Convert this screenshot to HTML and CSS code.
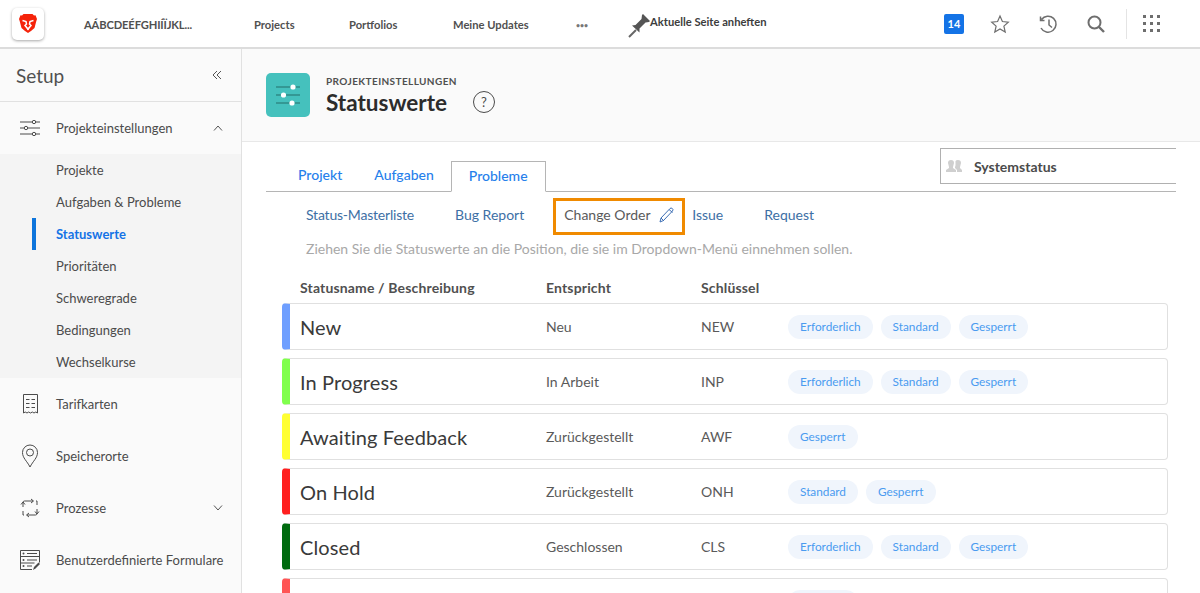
FILE: index.html
```html
<!DOCTYPE html>
<html>
  <head>
    <meta charset="UTF-8" />
    <title>Statuswerte</title>
    <link rel="stylesheet" href="styles.css">
  </head>
  <body>
    <header class="topbar">
      <div class="logo">
        <svg width="18" height="19" viewBox="0 0 18 19">
          <path d="M4.500 0h9L15 1.500l1.500-.2L18 5l-.8 2.500L15.500 14 12 17l-3 2-3-2-3.500-3L.8 7.500 0 5l1.500-3.700L3 1.500z" fill="#f5230a" />
          <path d="M3.500 6.500L7 7.500 7.500 10 6 11.500 9 15l3-3.500L10.500 10 11 7.500l3.500-1" fill="none" stroke="#fff" stroke-width="1.500" />
          <path d="M7.500 14.500h3L9 16.500z" fill="#fff" />
        </svg>
      </div>
      <nav class="topnav">
        <a class="nav-company">AÁBCDEÉFGHIÍÏJKL...</a>
        <a class="nav-projects">Projects</a>
        <a class="nav-portfolios">Portfolios</a>
        <a class="nav-updates">Meine Updates</a>
        <a class="nav-more">&#8226;&#8226;&#8226;</a>
      </nav>
      <div class="pin">
        <svg width="22" height="24" viewBox="0 0 22 24">
          <path d="M1 23l7-7" stroke="#666" stroke-width="2" />
          <path d="M4 11.500l3.500-.5 6-6L14 1l1-1 7 7-1 1-3.500.5-6 6 0 4z" fill="#555" />
        </svg>
        <span>Aktuelle Seite anheften</span>
      </div>
      <div class="top-icons">
        <span class="badge">14</span>
        <svg class="top-icon" width="20" height="20" viewBox="0 0 20 20">
          <path d="M10 2l2.400 5.500 5.900.6-4.400 4 1.300 5.900-5.200-3-5.200 3 1.300-5.900-4.400-4 5.900-.6z" fill="none" stroke="#6e6e6e" stroke-width="1.200" />
        </svg>
        <svg class="top-icon" width="20" height="20" viewBox="0 0 20 20">
          <path d="M3.500 5.500A8 8 0 1 1 3 14M2.500 2.500v4h4M11 5.500V11l3 2.500" fill="none" stroke="#6e6e6e" stroke-width="1.500" />
        </svg>
        <svg class="top-icon" width="20" height="20" viewBox="0 0 20 20">
          <circle cx="8.500" cy="8.500" r="6" fill="none" stroke="#6e6e6e" stroke-width="2" />
          <path d="M13 13l5 5" stroke="#6e6e6e" stroke-width="2.400" />
        </svg>
        <span class="divider"></span>
        <div class="grid-icon">
          <i></i><i></i><i></i><i></i><i></i><i></i><i></i><i></i><i></i>
        </div>
      </div>
    </header>

    <div class="layout">
      <aside class="sidebar">
        <div class="side-head">
          <h2>Setup</h2>
          <svg width="10" height="10" viewBox="0 0 10 10">
            <path d="M5 1L1 5l4 4M9 1L5 5l4 4" fill="none" stroke="#555" stroke-width="1" />
          </svg>
        </div>
        <div class="side-item side-open">
          <svg class="side-icon" width="20" height="16" viewBox="0 0 20 16">
            <path d="M0 2h12M16 2h4M0 8h4M8 8h12M0 14h12M16 14h4" stroke="#4b4b4b" stroke-width="1" />
            <circle cx="14" cy="2" r="1.700" fill="none" stroke="#4b4b4b" />
            <circle cx="6" cy="8" r="1.700" fill="none" stroke="#4b4b4b" />
            <circle cx="14" cy="14" r="1.700" fill="none" stroke="#4b4b4b" />
          </svg>
          <span>Projekteinstellungen</span>
          <svg class="chev" width="10" height="6" viewBox="0 0 10 6">
            <path d="M1 5.500L5 1l4 4.500" fill="none" stroke="#555" />
          </svg>
        </div>
        <ul class="sub-list">
          <li>Projekte</li>
          <li>Aufgaben &amp; Probleme</li>
          <li class="current">Statuswerte</li>
          <li>Prioritäten</li>
          <li>Schweregrade</li>
          <li>Bedingungen</li>
          <li>Wechselkurse</li>
        </ul>
        <div class="side-item">
          <svg class="side-icon" width="20" height="22" viewBox="0 0 20 22">
            <path d="M3.500 20V1.500h14V20l-1.700-1-1.800 1-1.700-1-1.800 1-1.800-1-1.700 1-1.800-1z" fill="none" stroke="#4b4b4b" />
            <path d="M6 6.500h3.500M11.500 6.500H15M6 10.500h3.500M11.500 10.500H15M6 14.500h3.500M11.500 14.500H15" stroke="#4b4b4b" />
          </svg>
          <span>Tarifkarten</span>
        </div>
        <div class="side-item">
          <svg class="side-icon" width="20" height="24" viewBox="0 0 20 24">
            <path d="M10 23C7 17 2.500 14 2.500 8.500a7.500 7.500 0 0 1 15 0C17.500 14 13 17 10 23z" fill="none" stroke="#4b4b4b" />
            <circle cx="10" cy="8.500" r="3.500" fill="none" stroke="#4b4b4b" />
          </svg>
          <span>Speicherorte</span>
        </div>
        <div class="side-item">
          <svg class="side-icon" width="20" height="20" viewBox="0 0 20 20">
            <path d="M3 9V4.500Q3 3 4.500 3H13M11 1l2.500 2L11 5M17 11v4.500Q17 17 15.500 17H7M9 15l-2.500 2L9 19M16 3h1v4M3 13v4h1M1 6.500L3 4l2 2.500M15 13.500l2 2.500 2-2.500" fill="none" stroke="#4b4b4b" />
          </svg>
          <span>Prozesse</span>
          <svg class="chev" width="10" height="6" viewBox="0 0 10 6">
            <path d="M1 .5L5 5l4-4.500" fill="none" stroke="#555" />
          </svg>
        </div>
        <div class="side-item">
          <svg class="side-icon" width="20" height="20" viewBox="0 0 20 20">
            <path d="M12 19.500H.5V.5h19v12" fill="none" stroke="#4b4b4b" />
            <path d="M.5 6.500h19M.5 13h14M7 3.500h10M7 10h10M7 16h5" stroke="#4b4b4b" />
            <circle cx="3.500" cy="3.500" r="1" fill="#4b4b4b" />
            <circle cx="3.500" cy="10" r="1" fill="#4b4b4b" />
            <circle cx="3.500" cy="16" r="1" fill="#4b4b4b" />
            <path d="M13 20l1-3 4.500-4.500L20 14l-4.500 4.500z" fill="#4b4b4b" />
          </svg>
          <span>Benutzerdefinierte Formulare</span>
        </div>
      </aside>

      <main class="main">
        <div class="page-head">
          <div class="page-icon">
            <svg width="24" height="24" viewBox="0 0 24 24">
              <path d="M0 4h24M0 12h24M0 20h24" stroke="#2f8a87" stroke-width="1.400" />
              <circle cx="17" cy="4" r="2.600" fill="#fff" />
              <circle cx="7.500" cy="12" r="2.600" fill="#fff" />
              <circle cx="16" cy="20" r="2.600" fill="#fff" />
            </svg>
          </div>
          <div class="page-title">
            <div class="eyebrow">PROJEKTEINSTELLUNGEN</div>
            <div class="title-line">
              <h1>Statuswerte</h1>
              <span class="help">?</span>
            </div>
          </div>
        </div>

        <div class="content">
          <div class="tabs-row">
            <div class="tabs">
              <a class="tab">Projekt</a>
              <a class="tab">Aufgaben</a>
              <a class="tab tab-active">Probleme</a>
            </div>
            <div class="group-box">
              <svg width="16" height="12" viewBox="0 0 16 12">
                <path d="M0 12V10l3-2V7L2 3q0-3 3-3t3 3L7 7v1l3 2v2zM11 12V10L9 8V7q.5-1 .5-2L9.500 1Q10 0 12 0q3 0 3 3l-1 4v1l2 2v2z" fill="#cfcfcf" />
              </svg>
              <span>Systemstatus</span>
            </div>
          </div>

          <div class="subtabs">
            <a class="subtab subtab-first">Status-Masterliste</a>
            <a class="subtab">Bug Report</a>
            <a class="subtab subtab-active">
              Change Order
              <svg width="16" height="16" viewBox="0 0 16 16">
                <path d="M1 15l1-4 9-9.500q1-1 2.300 0t.2 2.500L4.500 13.500zM2 11l3 3M10 2.500l3.500 3" fill="none" stroke="#3d6fb5" />
              </svg>
            </a>
            <a class="subtab subtab-issue">Issue</a>
            <a class="subtab">Request</a>
          </div>

          <p class="hint">Ziehen Sie die Statuswerte an die Position, die sie im Dropdown-Menü einnehmen sollen.</p>

          <div class="status-head">
            <span>Statusname / Beschreibung</span>
            <span>Entspricht</span>
            <span>Schlüssel</span>
          </div>

          <div class="status-row c-blue">
            <span class="status-name">New</span>
            <span class="status-cell">Neu</span>
            <span class="status-cell">NEW</span>
            <div class="pills"><span>Erforderlich</span><span>Standard</span><span>Gesperrt</span></div>
          </div>
          <div class="status-row c-lime">
            <span class="status-name">In Progress</span>
            <span class="status-cell">In Arbeit</span>
            <span class="status-cell">INP</span>
            <div class="pills"><span>Erforderlich</span><span>Standard</span><span>Gesperrt</span></div>
          </div>
          <div class="status-row c-yellow">
            <span class="status-name">Awaiting Feedback</span>
            <span class="status-cell">Zurückgestellt</span>
            <span class="status-cell">AWF</span>
            <div class="pills"><span>Gesperrt</span></div>
          </div>
          <div class="status-row c-red">
            <span class="status-name">On Hold</span>
            <span class="status-cell">Zurückgestellt</span>
            <span class="status-cell">ONH</span>
            <div class="pills"><span>Standard</span><span>Gesperrt</span></div>
          </div>
          <div class="status-row c-green">
            <span class="status-name">Closed</span>
            <span class="status-cell">Geschlossen</span>
            <span class="status-cell">CLS</span>
            <div class="pills"><span>Erforderlich</span><span>Standard</span><span>Gesperrt</span></div>
          </div>
          <div class="status-row c-salmon">
            <span class="status-name"></span>
            <span class="status-cell"></span>
            <span class="status-cell"></span>
            <div class="pills pills-empty"><span></span></div>
          </div>
        </div>
      </main>
    </div>
  </body>
</html>
```

FILE: styles.css
```css
* {
  box-sizing: border-box;
}

html,
body {
  height: 593px;
  overflow: hidden;
}

body {
  margin: 0;
  background: #fff;
  font-family: "Lato", Arial, sans-serif;
  color: #4b4b4b;
}

/* top bar */
.topbar {
  display: flex;
  align-items: center;
  height: 49px;
  border-bottom: 2px solid #dcdcdc;
  padding-left: 12px;
}

.logo {
  display: flex;
  align-items: center;
  justify-content: center;
  width: 32px;
  height: 32px;
  border-radius: 5px;
  background: #fff;
  box-shadow: 0 1px 3px rgba(0, 0, 0, 0.35);
}

.topnav {
  display: flex;
  align-items: center;
  padding-top: 2px;
  font-size: 11.200px;
  font-weight: 700;
  color: #505050;
}

.nav-company {
  margin-left: 40px;
  width: 170px;
  letter-spacing: -0.15px;
}

.nav-projects {
  width: 95px;
}

.nav-portfolios {
  width: 104px;
}

.nav-updates {
  width: 123px;
}

.nav-more {
  width: 52px;
  font-size: 7px;
  color: #777;
}

.pin {
  display: flex;
  align-items: center;
  font-size: 11.200px;
  font-weight: 700;
  color: #3d3d3d;
}

.pin span {
  margin-bottom: 4px;
}

.pin svg {
  margin-top: 4px;
}

.top-icons {
  display: flex;
  align-items: center;
  margin-left: auto;
  padding-right: 40px;
}

.badge {
  display: flex;
  align-items: center;
  justify-content: center;
  width: 20px;
  height: 20px;
  margin-right: 26px;
  border-radius: 2px;
  background: #1473e6;
  color: #fff;
  font-size: 11px;
  font-weight: 700;
}

.top-icon {
  margin-right: 28px;
}

.divider {
  width: 1px;
  height: 30px;
  margin-left: -8px;
  margin-right: 16px;
  background: #e4e4e4;
}

.grid-icon {
  display: grid;
  grid-template-columns: repeat(3, 3px);
  grid-auto-rows: 3px;
  gap: 4px;
}

.grid-icon i {
  background: #6e6e6e;
}

/* sidebar */
.layout {
  display: flex;
  height: 544px;
}

.sidebar {
  flex: 0 0 242px;
  background: #fafafa;
  border-right: 1px solid #e1e1e1;
}

.side-head {
  display: flex;
  align-items: center;
  justify-content: space-between;
  height: 53px;
  padding: 0 19px 0 16px;
  border-bottom: 1px solid #e1e1e1;
}

.side-head h2 {
  margin: 0;
  font-size: 19px;
  font-weight: 400;
  color: #505050;
}

.side-item {
  display: flex;
  align-items: center;
  height: 52px;
  padding-left: 20px;
  font-size: 13px;
  color: #4b4b4b;
}

.side-icon {
  flex: 0 0 20px;
  margin-right: 16px;
}

.chev {
  margin-left: auto;
  margin-right: 18px;
}

.sub-list {
  margin: 0;
  padding: 0;
  list-style: none;
  background: #f4f4f4;
  font-size: 13px;
}

.sub-list li {
  display: flex;
  align-items: center;
  height: 32px;
  margin-left: 32px;
  padding-left: 20px;
  border-left: 4px solid transparent;
}

.sub-list .current {
  border-left-color: #0d75dc;
  color: #1473e6;
  font-weight: 700;
}

/* page header */
.main {
  flex: 1;
  min-width: 0;
}

.page-head {
  display: flex;
  align-items: center;
  height: 93px;
  padding-left: 24px;
  background: #fafafa;
  border-bottom: 1px solid #e8e8e8;
}

.page-icon {
  display: flex;
  align-items: center;
  justify-content: center;
  width: 44px;
  height: 44px;
  margin-right: 16px;
  border-radius: 5px;
  background: #45c1bd;
}

.eyebrow {
  font-size: 10px;
  font-weight: 700;
  letter-spacing: 0.4px;
  color: #505050;
}

.title-line {
  display: flex;
  align-items: center;
  margin-top: 2px;
}

h1 {
  margin: 0;
  font-size: 22.500px;
  font-weight: 700;
  color: #2c2c2c;
}

.help {
  display: flex;
  align-items: center;
  justify-content: center;
  width: 22px;
  height: 22px;
  margin-left: 26px;
  border: 1px solid #4b4b4b;
  border-radius: 50%;
  font-size: 13px;
}

/* tabs */
.content {
  width: 910px;
  margin-left: 24px;
  overflow: hidden;
}

.tabs-row {
  display: flex;
  justify-content: space-between;
  height: 50px;
  padding-top: 6px;
  border-bottom: 1px solid #b5b5b5;
}

.tabs {
  display: flex;
  align-items: flex-end;
  padding-left: 16px;
}

.tab {
  display: flex;
  align-items: center;
  height: 31px;
  padding: 0 16px 2px;
  font-size: 14px;
  font-weight: 500;
  color: #2680eb;
}

.tab-active {
  height: 31px;
  margin-left: 1px;
  margin-bottom: -1px;
  padding: 0 17px 3px;
  border: 1px solid #b5b5b5;
  border-bottom: 1px solid #fff;
  background: #fff;
}

.group-box {
  display: flex;
  align-items: center;
  flex: 0 0 240px;
  height: 36px;
  margin-right: -4px;
  padding-left: 5px;
  border: 1px solid #b0b0b0;
  font-size: 14px;
  font-weight: 700;
  color: #4b4b4b;
}

.group-box span {
  margin-left: 12px;
  padding-top: 1px;
}

.subtabs {
  display: flex;
  align-items: center;
  height: 37px;
  margin-top: 6px;
  padding-left: 40px;
  font-size: 14px;
  color: #3d6fa5;
}

.subtab {
  margin-right: 40px;
  padding-bottom: 5px;
}

.subtab-first {
  margin-right: 41px;
  letter-spacing: -0.2px;
}

.subtab-issue {
  margin-right: 41px;
}

.subtab-active {
  display: flex;
  align-items: center;
  justify-content: space-between;
  width: 132px;
  height: 37px;
  margin-left: -11px;
  margin-right: 7px;
  padding: 0 7px 4px 8px;
  border: 3px solid #f08a00;
  color: #5a5a5a;
}

.hint {
  margin: 6px 0 0 40px;
  font-size: 14px;
  line-height: 16px;
  color: #a8a8a8;
}

/* status table */
.status-head,
.status-row {
  display: grid;
  grid-template-columns: 246px 155px 87px 1fr;
  align-items: center;
  width: 886px;
  margin-left: 16px;
  padding-left: 18px;
}

.status-head {
  height: 46px;
  padding-top: 14px;
  font-size: 14px;
  font-weight: 700;
  letter-spacing: 0.15px;
  color: #505050;
}

.status-head span:first-child {
  white-space: nowrap;
}

.status-row {
  height: 47px;
  margin-bottom: 8px;
  border: 1px solid #e0e0e0;
  border-left: 8px solid #ccc;
  border-radius: 4px;
  padding-left: 10px;
}

.c-blue {
  border-left-color: #6f9fff;
}

.c-lime {
  border-left-color: #80ff4d;
}

.c-yellow {
  border-left-color: #ffff33;
}

.c-red {
  border-left-color: #ff1f1f;
}

.c-green {
  border-left-color: #006b0f;
}

.c-salmon {
  border-left-color: #ff5555;
}

.status-name {
  font-size: 20px;
  letter-spacing: 0.1px;
  color: #3a3a3a;
}

.status-cell {
  font-size: 14px;
  color: #5a5a5a;
}

.pills {
  display: flex;
  gap: 8px;
}

.pills span {
  display: flex;
  align-items: center;
  height: 24px;
  padding: 0 12px;
  border-radius: 12px;
  background: #f0f5fc;
  font-size: 11.800px;
  color: #4a9bf0;
}

.pills-empty span {
  width: 70px;
}
```
